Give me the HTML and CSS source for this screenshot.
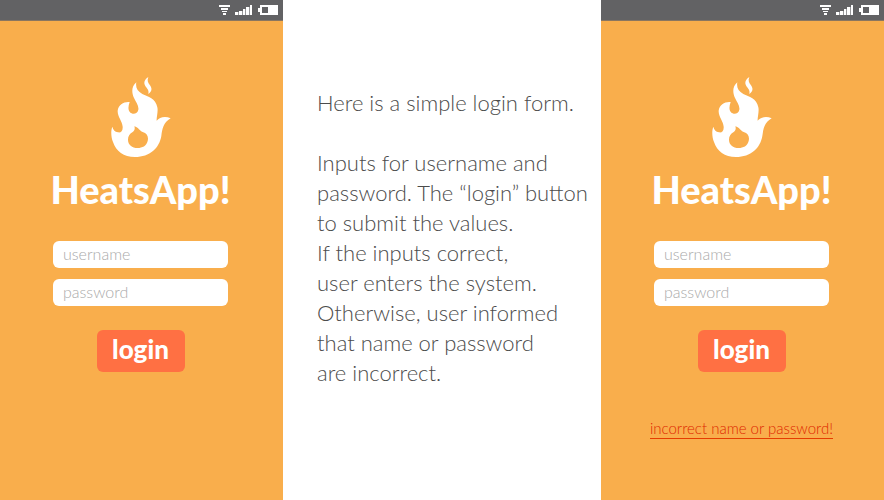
FILE: index.html
```
<!DOCTYPE html>
<html lang="en">
<head>
<meta charset="utf-8">
<meta name="viewport" content="width=device-width, initial-scale=1">
<title>HeatsApp login</title>
<link rel="stylesheet" href="styles.css">
</head>
<body>
<svg class="symbols" aria-hidden="true">
  <symbol id="flame" viewBox="33 22 180 240">
    <path fill-rule="evenodd" d="M109 38C94 50 95 68 101 83C108 98 117 109 115 120C113 133 98 136 90 128C83 120 85 108 89 97C73 95 55 104 53 123C52 141 67 154 68 171C69 184 62 190 54 188C44 186 39 180 37 171C32 183 33 203 39 217C48 244 71 262 105 262C150 262 178 235 184 199C187 177 190 159 212 146C195 138 178 143 170 153C169 143 175 125 172 113C167 85 144 82 127 73C112 65 106 54 109 38ZM103 170C116 174 119 184 128 187C142 191 146 202 143 214C139 229 127 235 113 235C96 235 84 225 84 210C84 199 89 193 97 188C103 184 106 178 103 170Z"/>
    <path d="M145 22C133 30 130 40 136 49C141 57 148 61 145 73C156 66 157 57 150 47C143 38 141 31 145 22Z"/>
  </symbol>
  <symbol id="status" viewBox="0 0 60 12">
    <path d="M1 1h11v2H1zM3 4h7v2H3zM4 7h5v1H4zM5 9h3v2H5zM17 8h3v3h-3zM21 7h3v4h-3zM25 5h2v6h-2zM28 3h3v8h-3zM32 1h2v10h-2z"/>
    <path opacity=".35" d="M20 8h1v3h-1zM24 7h1v4h-1zM27 5h1v6h-1zM31 3h1v8h-1z"/>
    <path fill-rule="evenodd" d="M42 1h18v10H42V8h-2V4h2zM44 3v6h6V3z"/>
  </symbol>
</svg>
<main class="board">
  <section class="phone">
    <header class="bar"><svg class="status" role="img" aria-label="Phone status"><use href="#status"/></svg></header>
    <form class="login">
      <svg class="flame" aria-hidden="true"><use href="#flame"/></svg>
      <h1 class="brand">HeatsApp!</h1>
      <div class="fields">
        <input class="field" type="text" placeholder="username" aria-label="username">
        <input class="field" type="password" placeholder="password" aria-label="password">
      </div>
      <button class="submit" type="button">login</button>
    </form>
  </section>
  <section class="notes">
    <p>Here is a simple login form.</p>
    <p>Inputs for username and<br>password. The “login” button<br>to submit the values.<br>If the inputs correct,<br>user enters the system.<br>Otherwise, user informed<br>that name or password<br>are incorrect.</p>
  </section>
  <section class="phone">
    <header class="bar"><svg class="status" role="img" aria-label="Phone status"><use href="#status"/></svg></header>
    <form class="login">
      <svg class="flame" aria-hidden="true"><use href="#flame"/></svg>
      <h2 class="brand">HeatsApp!</h2>
      <div class="fields">
        <input class="field" type="text" placeholder="username" aria-label="username">
        <input class="field" type="password" placeholder="password" aria-label="password">
      </div>
      <button class="submit" type="button">login</button>
      <p class="error" role="alert">incorrect name or password!</p>
    </form>
  </section>
</main>
</body>
</html>
```
FILE: styles.css
```
* { box-sizing: border-box; }

body {
  margin: 0;
  background: #fff;
  color: #4c4c4c;
  font-family: Lato, "Open Sans", sans-serif;
}

.symbols { position: absolute; width: 0; height: 0; }

.board {
  display: grid;
  grid-template-columns: minmax(0, 283fr) minmax(0, 318fr) minmax(0, 283fr);
  min-height: 100vh;
}

.phone { background: #f9ae4c; }

.bar {
  display: flex;
  justify-content: flex-end;
  align-items: center;
  height: 21px;
  padding-right: 5px;
  background: #626264;
  border-bottom: 1px solid #8a7660;
}

.status { width: 60px; height: 12px; fill: #fff; }

.login {
  display: flex;
  flex-direction: column;
  align-items: center;
  padding: 56px 55px 0 53px;
}

.flame { width: 60px; height: 80px; fill: #fff; }

.brand {
  margin: 8px 0 0;
  color: #fff;
  font-size: 38px;
  font-weight: 900;
  line-height: 48px;
  white-space: nowrap;
}

.fields {
  display: grid;
  gap: 11px;
  width: 100%;
  margin-top: 28px;
}

.field {
  width: 100%;
  height: 27px;
  padding: 0 10px 2px;
  border: 0;
  border-radius: 6px;
  background: #fff;
  color: #666;
  font: 300 16px Lato, "Open Sans", sans-serif;
}

.field::placeholder { color: #aaa; opacity: 1; }

.submit {
  width: 88px;
  height: 42px;
  margin-top: 24px;
  padding: 0 0 4px;
  border: 0;
  border-radius: 6px;
  background: #ff7043;
  color: #fff;
  font: 900 26px Lato, "Open Sans", sans-serif;
}

.error {
  margin: 47px 0 0;
  border-bottom: 1px solid #e63c00;
  color: #e02800;
  font-size: 15px;
  font-weight: 300;
  line-height: 19px;
  white-space: nowrap;
}

.notes {
  padding: 88px 0 0 34px;
  font-size: 22px;
  font-weight: 300;
  line-height: 30px;
  white-space: nowrap;
}

.notes p { margin: 0 0 30px; }
```
